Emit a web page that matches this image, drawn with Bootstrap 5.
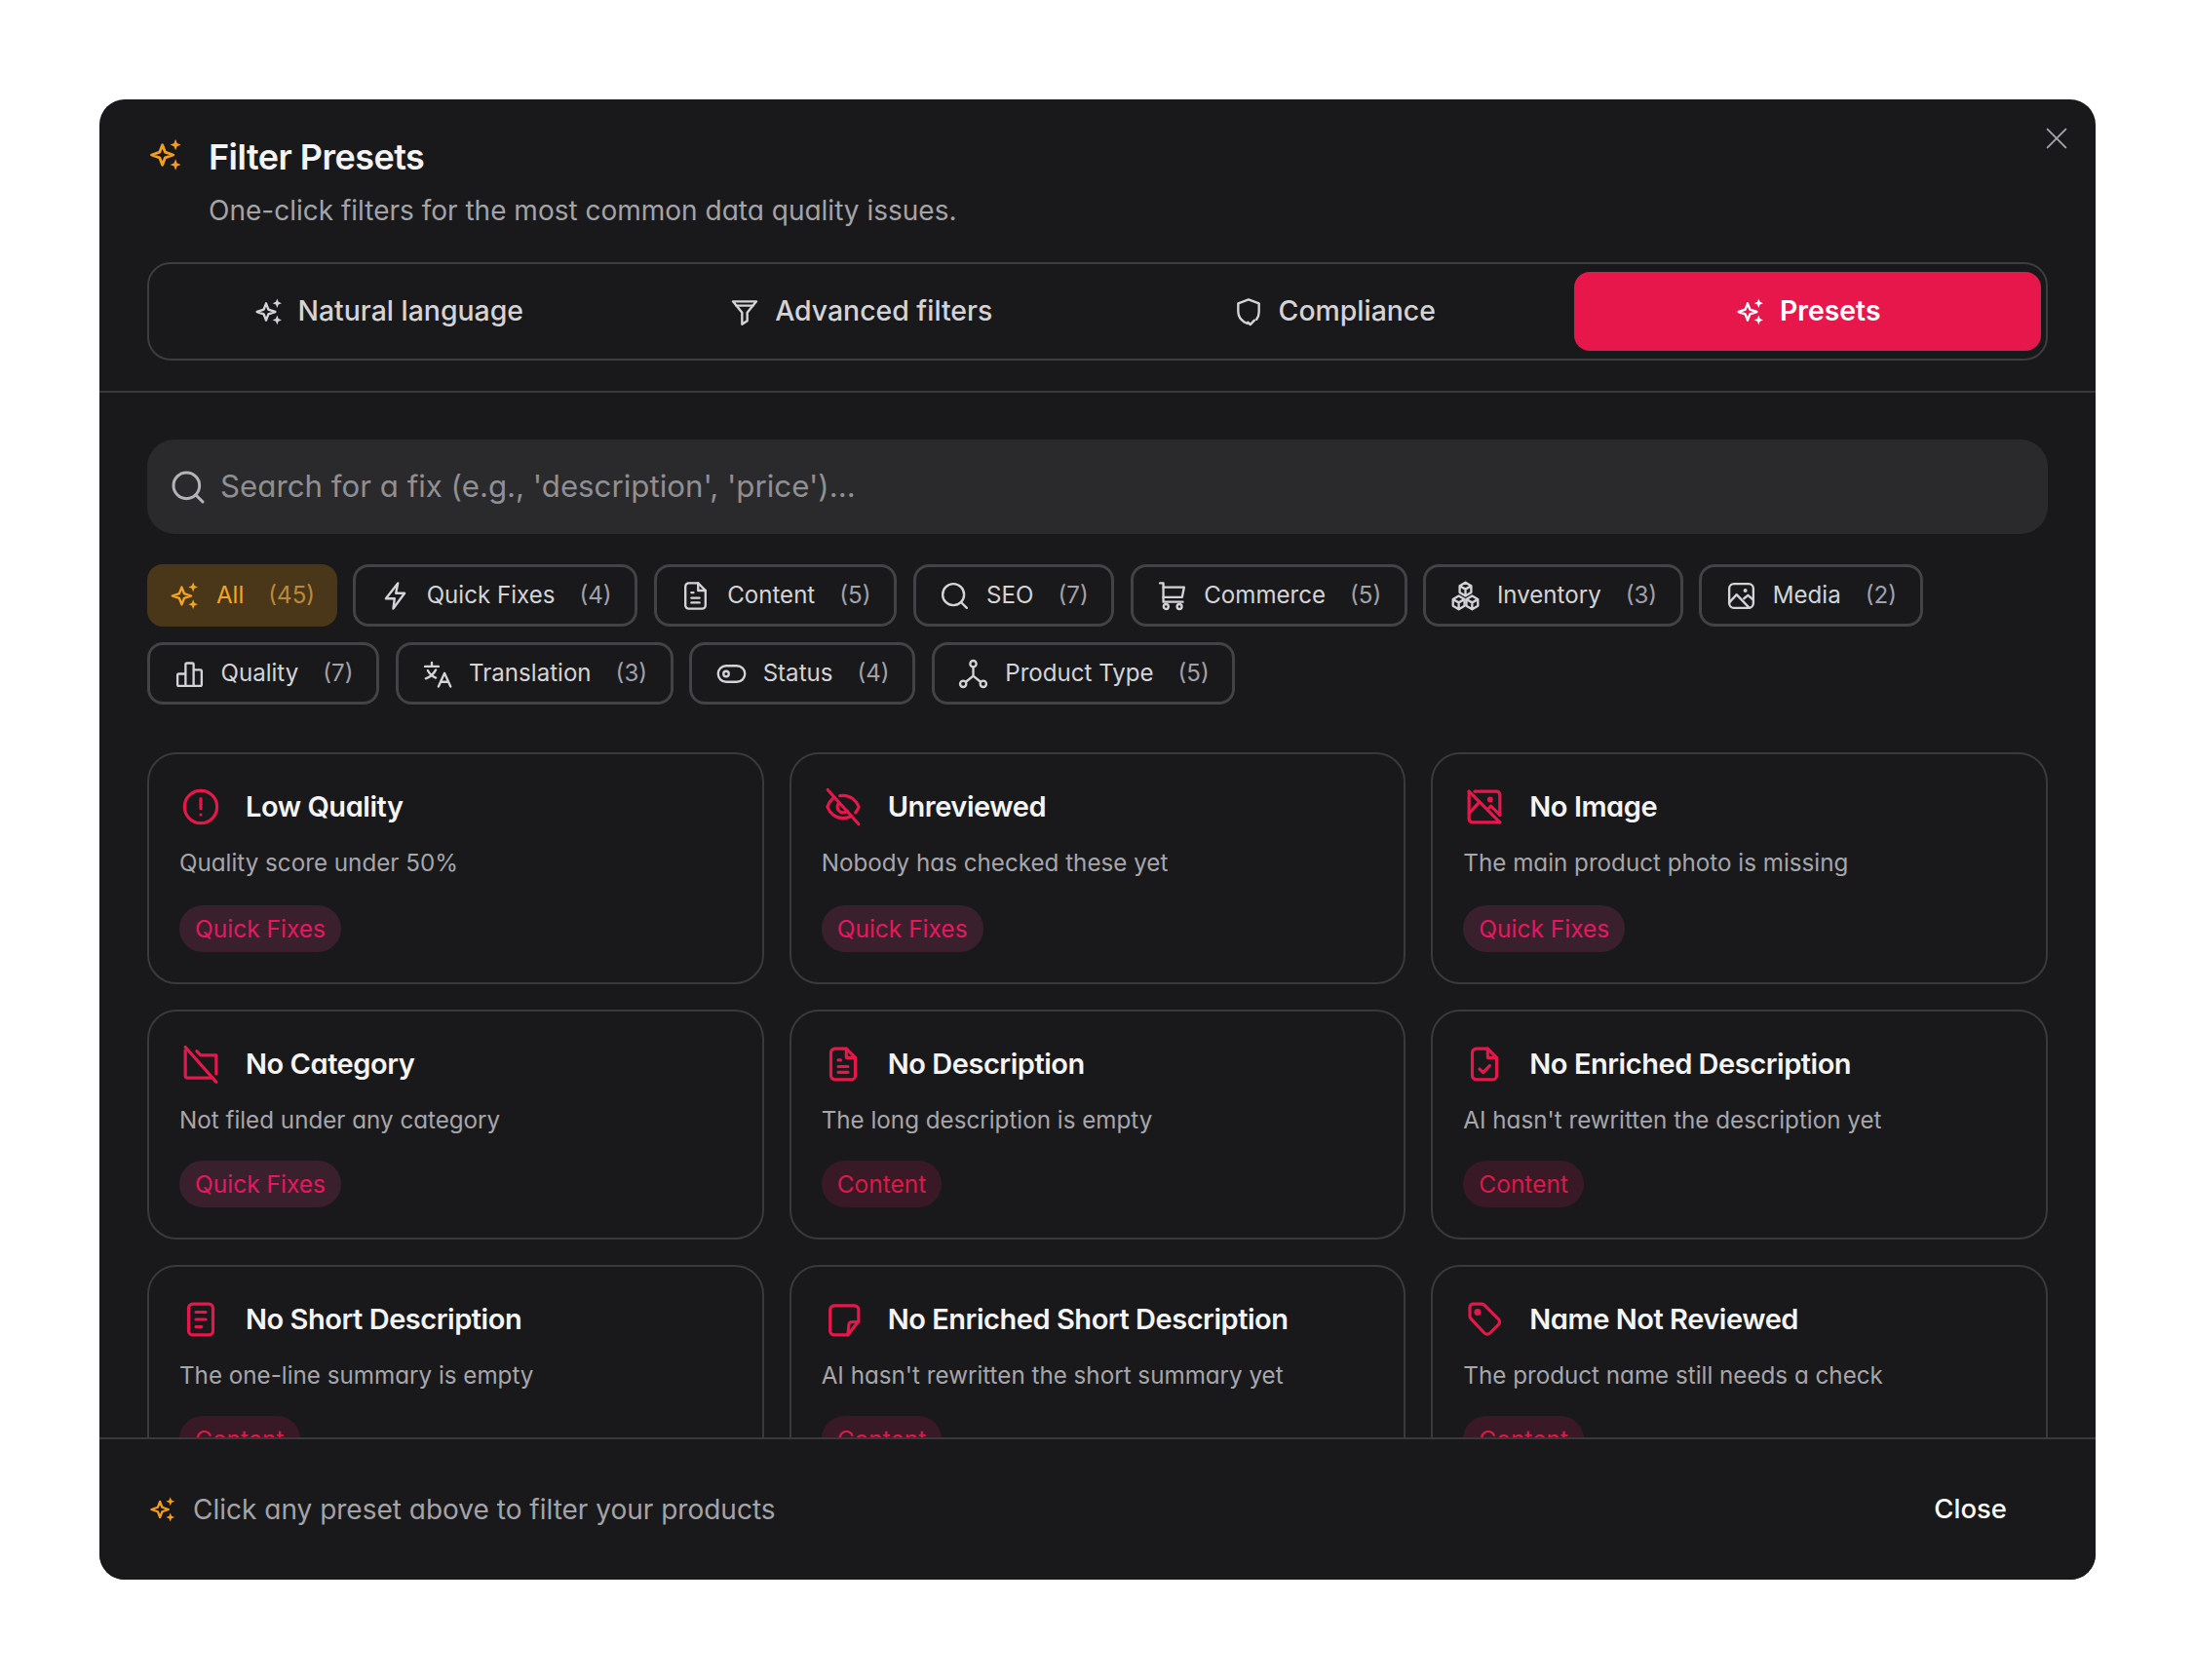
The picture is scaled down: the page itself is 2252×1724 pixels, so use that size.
<!DOCTYPE html>
<html lang="en">
<head>
<meta charset="UTF-8">
<meta name="viewport" content="width=device-width, initial-scale=1.0">
<title>Filter Presets</title>
<link href="https://cdn.jsdelivr.net/npm/bootstrap@5.3.0/dist/css/bootstrap.min.css" rel="stylesheet">
<style>
  body { background: #fff; font-family: "Inter", "Noto Sans", sans-serif; font-feature-settings: "cv11" 1; }
  .preset-modal { width: 2048px; height: 1519px; margin: 102px; background: #19191b; border-radius: 26px; overflow: hidden; color: #e4e4e7; }
  .ico { fill: none; stroke: currentColor; stroke-width: 1.8; stroke-linecap: round; stroke-linejoin: round; flex-shrink: 0; }
  .ico-30 { width: 30px; height: 30px; }
  .ico-40 { width: 40px; height: 40px; }
  .x-btn { top: 24px; right: 24px; padding: 0; border: 0; background: none; color: #a1a1aa; line-height: 0; }
  .x-btn .ico { width: 32px; height: 32px; stroke-width: 1.5; }
  .head-area { padding: 37px 49px 31px; border-bottom: 2px solid #39393c; }
  .head-title { font-size: 36px; line-height: 44px; font-weight: 600; letter-spacing: -0.015em; color: #f4f4f5; margin: 0; }
  .head-spark { width: 38px; height: 38px; color: #f59e1b; margin: -5px 26px 0 -1px; }
  .head-sub { font-size: 28px; line-height: 40px; color: #a3a3a8; margin: 13px 0 33px 63px; }
  .tab-bar { height: 101px; border: 2px solid #3d3d40; border-radius: 24px; padding: 8px 5px; gap: 6px; display: grid; grid-template-columns: repeat(4, 1fr); }
  .tab-item { display: flex; align-items: center; justify-content: center; gap: 15px; font-size: 28.4px; font-weight: 500; color: #d4d4d8; border: 0; border-radius: 16px; }
  .tab-item .ico { width: 32px; height: 32px; }
  .tab-item.on { background: #e8174b; color: #fff; font-weight: 600; }
  .tab-item:hover { color: #d4d4d8; }
  .tab-item.on:hover { background: #e8174b; color: #fff; }
  .main-area { min-height: 0; padding: 48px 49px 0; }
  .search-box { height: 97px; background: #2a2a2d; border-radius: 28px; padding-left: 22px; gap: 13px; color: #b4b4b8; margin-bottom: 31px; }
  .search-box input { background: transparent; border: 0; padding: 0; font-size: 31.25px; color: #e4e4e7; box-shadow: none; font-feature-settings: "cv11" 1; }
  .search-box input::placeholder { color: #8f8f94; opacity: 1; }
  .chip-wrap { gap: 16px 16.5px; margin-bottom: 49px; }
  .chip-btn { height: 64px; display: flex; align-items: center; padding: 0 23.6px 0 23.5px; border: 3px solid #434347; border-radius: 16px; font-size: 24.1px; font-weight: 400; color: #d4d4d8; }
  .chip-btn:hover { color: #d4d4d8; border-color: #434347; }
  .chip-btn .ico { width: 33px; height: 33px; margin-right: 16px; stroke-width: 1.7; }
  .chip-btn .chip-n { margin-left: 25px; color: #a1a1aa; }
  .chip-btn.on { background: #4a3719; border-color: #4a3719; border-width: 0; padding: 0 22.6px 0 21px; color: #f5a524; }
  .chip-btn.on .ico { margin-right: 17px; }
  .chip-btn.on .chip-n { color: #b98a38; }
  .preset-grid { --bs-gutter-x: 26px; --bs-gutter-y: 26px; }
  .preset-card { height: 236px; background: #19191b; border: 2px solid #3a3a3d; border-radius: 30px; padding: 25.5px 31px 31px; color: #e4e4e7; }
  .preset-grid .col:nth-child(-n+3) .preset-card { height: 238px; }
  .preset-icon { width: 44px; height: 56px; margin-right: 24px; color: #e8174b; }
  .preset-icon .ico { stroke-width: 1.9; }
  .preset-name { font-size: 29px; line-height: 56px; font-weight: 600; letter-spacing: -0.016em; color: #f4f4f5; margin: 0; }
  .preset-desc { font-size: 24.2px; line-height: 36px; color: #a6a6ab; margin: 12px 0 0; }
  .cat-pill { height: 48px; padding: 0 16px; border-radius: 24px; font-size: 24.5px; font-weight: 400; line-height: 48px; }
  .cat-quick { background: #3a202d; color: #e5185f; }
  .cat-content { background: #3a1926; color: #d81b4a; }
  .foot-area { height: 146px; flex-shrink: 0; padding: 0 49px; border-top: 2px solid #39393c; background: #19191b; }
  .foot-spark { color: #f59e1b; margin-right: 17px; }
  .foot-text { font-size: 28px; color: #a3a3a8; }
  .close-btn { font-size: 27.5px; font-weight: 500; color: #fafafa; border: 0; padding: 10px 42px; }
  .close-btn:hover { color: #fafafa; }
</style>
</head>
<body>
<svg width="0" height="0" class="d-block">
  <defs>
    <symbol id="i-spark" viewBox="0 0 24 24">
      <path d="M10.500 5.500l1.800 4.700 5.200 1.800-5.200 1.800-1.800 4.700-1.800-4.700L3.500 12l5.200-1.800z"/>
      <path d="M19 1.800l1 2.600 2.500 1-2.500 1-1 2.600-1-2.600-2.500-1 2.500-1z" fill="currentColor" stroke="none"/>
      <path d="M19 14.700l1 2.600 2.500 1-2.500 1-1 2.600-1-2.600-2.500-1 2.500-1z" fill="currentColor" stroke="none"/>
    </symbol>
    <symbol id="i-filter" viewBox="0 0 24 24">
      <path d="M3 4h18l-7 8.500V19l-4 2.500v-9z"/><path d="M5.500 7.200h13"/>
    </symbol>
    <symbol id="i-shield" viewBox="0 0 24 24">
      <path d="M11 21C7 19.300 4 16.800 4 12V5.500L12 2.500l8 3V12c0 2.400-.7 4.300-1.900 5.800"/><path d="M11.500 20l1.800 1.800 3.200-3.300"/>
    </symbol>
    <symbol id="i-search" viewBox="0 0 24 24">
      <circle cx="11" cy="11" r="8"/><path d="M21 21l-4.300-4.300"/>
    </symbol>
    <symbol id="i-bolt" viewBox="0 0 24 24">
      <path d="M14 2.500L5 14h6.500l-1 7.500L19 10h-6.500z"/>
    </symbol>
    <symbol id="i-file" viewBox="0 0 24 24">
      <path d="M14 2.500H7a2.500 2.500 0 0 0-2.500 2.500v14A2.500 2.500 0 0 0 7 21.500h10a2.500 2.500 0 0 0 2.500-2.500V8z"/><path d="M14 2.500V8h5.500"/><path d="M9 9.500h1.500M9 13.500h6M9 17h6"/>
    </symbol>
    <symbol id="i-cart" viewBox="0 0 24 24">
      <path d="M3 2.500h2.500v14H20"/><path d="M5.500 5.500H21l-1.500 7.500h-14"/><circle cx="7.500" cy="20" r="1.800"/><circle cx="17.500" cy="20" r="1.800"/>
    </symbol>
    <symbol id="i-boxes" viewBox="0 0 24 24">
      <path d="M12 2l4.300 2.500v5L12 12 7.700 9.500v-5zM7.700 4.500L12 7l4.300-2.500M12 7v5"/>
      <path d="M7 12l4.300 2.500v5L7 22l-4.300-2.500v-5zM2.700 14.500L7 17l4.300-2.500M7 17v5"/>
      <path d="M17 12l4.300 2.500v5L17 22l-4.300-2.500v-5zM12.700 14.500L17 17l4.300-2.500M17 17v5"/>
    </symbol>
    <symbol id="i-image" viewBox="0 0 24 24">
      <rect x="3" y="3" width="18" height="18" rx="3.500"/><path d="M3 17l5.500-6 9.500 10"/><path d="M14 14l3-2.500 4 3.500"/><circle cx="15" cy="8" r=".6" fill="currentColor"/>
    </symbol>
    <symbol id="i-bars" viewBox="0 0 24 24">
      <path d="M9 21H4a1 1 0 0 1-1-1v-7a1 1 0 0 1 1-1h5zM9 21V5a1 1 0 0 1 1-1h4a1 1 0 0 1 1 1v16zM15 21V9h5a1 1 0 0 1 1 1v10a1 1 0 0 1-1 1z"/>
    </symbol>
    <symbol id="i-lang" viewBox="0 0 24 24">
      <path d="M3 6.500h10M8 3.500v3M5 9.500c1.500 3 3.500 4.500 6 5.500M11 9c-1.500 3-3.500 5-7.500 6.500"/><path d="M13 21.500l4.500-10 4.500 10M14.500 18h6"/>
    </symbol>
    <symbol id="i-toggle" viewBox="0 0 24 24">
      <rect x="2" y="6" width="20" height="12" rx="6"/><circle cx="8" cy="12" r="2"/>
    </symbol>
    <symbol id="i-fork" viewBox="0 0 24 24">
      <circle cx="12" cy="4.500" r="2.300"/><circle cx="4.500" cy="19.500" r="2.300"/><circle cx="19.500" cy="19.500" r="2.300"/><path d="M12 7v6.500M6.500 18L12 13.500l5.500 4.500"/>
    </symbol>
    <symbol id="i-alert" viewBox="0 0 24 24">
      <circle cx="12" cy="12" r="10"/><path d="M12 7v6M12 16.800v.01"/>
    </symbol>
    <symbol id="i-eyeoff" viewBox="0 0 24 24">
      <path d="M5.800 6.800C4.200 8.100 3 9.900 2.300 12c1.600 4.200 5.400 7 9.700 7 1.800 0 3.500-.5 5-1.300M10 5.200c.6-.1 1.300-.2 2-.2 4.300 0 8.100 2.800 9.700 7-.5 1.300-1.200 2.500-2.100 3.500"/><path d="M9.500 9.500a3.500 3.500 0 0 0 5 5"/><path d="M2.500 1.500l19 21"/>
    </symbol>
    <symbol id="i-noimage" viewBox="0 0 24 24">
      <path d="M6 2.500h13.500a2 2 0 0 1 2 2V17M21.500 21.500H4.500a2 2 0 0 1-2-2V2.500"/><path d="M2.500 16l5.500-6"/><path d="M2.500 2.500l19 19"/><circle cx="15.500" cy="7.500" r=".8" fill="currentColor"/><path d="M14 13.500l2-2 5.500 5.500"/>
    </symbol>
    <symbol id="i-nofolder" viewBox="0 0 24 24">
      <path d="M2.500 3.500v15.500a1.500 1.500 0 0 0 1.500 1.500h15M9.500 4l2.500 2.500h9.500V18"/><path d="M2.500 1.500l19 21.500"/>
    </symbol>
    <symbol id="i-filecheck" viewBox="0 0 24 24">
      <path d="M14 2.500H7a2.500 2.500 0 0 0-2.500 2.500v14A2.500 2.500 0 0 0 7 21.500h10a2.500 2.500 0 0 0 2.500-2.500V8z"/><path d="M14 2.500V8h5.500"/><path d="M9 15l2.200 2.200 4-4.200"/>
    </symbol>
    <symbol id="i-short" viewBox="0 0 24 24">
      <rect x="4.500" y="2.500" width="15" height="19" rx="2.500"/><path d="M9 7.500h6M9 12h6M9 16.500h3.500"/>
    </symbol>
    <symbol id="i-note" viewBox="0 0 24 24">
      <path d="M15 21.500H6.500A2.500 2.500 0 0 1 4 19V6a2.500 2.500 0 0 1 2.500-2.500h12.500A2.500 2.500 0 0 1 21.500 6v7z"/><path d="M15 21.500l.5-6a2 2 0 0 1 2-2h4"/>
    </symbol>
    <symbol id="i-tag" viewBox="0 0 24 24">
      <path d="M3 4.500A2 2 0 0 1 5 2.500h5.500a2 2 0 0 1 1.400.6l8.700 8.700a2.400 2.400 0 0 1 0 3.400l-5.200 5.200a2.400 2.400 0 0 1-3.400 0L3.600 11.500a2 2 0 0 1-.6-1.400z"/><circle cx="7.800" cy="7.500" r="1.200" fill="currentColor"/>
    </symbol>
  </defs>
</svg>

<div class="preset-modal position-relative d-flex flex-column">
  <button type="button" class="x-btn position-absolute" aria-label="Close">
    <svg class="ico" viewBox="0 0 24 24"><path d="M5 5l14 14M19 5L5 19"/></svg>
  </button>

  <div class="head-area flex-shrink-0">
    <div class="d-flex align-items-center">
      <svg class="ico head-spark"><use href="#i-spark"/></svg>
      <h1 class="head-title">Filter Presets</h1>
    </div>
    <p class="head-sub">One-click filters for the most common data quality issues.</p>
    <div class="tab-bar">
      <button type="button" class="btn tab-item"><svg class="ico"><use href="#i-spark"/></svg>Natural language</button>
      <button type="button" class="btn tab-item"><svg class="ico"><use href="#i-filter"/></svg>Advanced filters</button>
      <button type="button" class="btn tab-item"><svg class="ico"><use href="#i-shield"/></svg>Compliance</button>
      <button type="button" class="btn tab-item on"><svg class="ico"><use href="#i-spark"/></svg>Presets</button>
    </div>
  </div>

  <div class="main-area flex-grow-1 overflow-hidden">
    <div class="search-box d-flex align-items-center">
      <svg class="ico ico-40"><use href="#i-search"/></svg>
      <input type="text" class="form-control" placeholder="Search for a fix (e.g., 'description', 'price')...">
    </div>

    <div class="chip-wrap d-flex flex-wrap">
      <button type="button" class="btn chip-btn on"><svg class="ico"><use href="#i-spark"/></svg>All<span class="chip-n">(45)</span></button>
      <button type="button" class="btn chip-btn"><svg class="ico"><use href="#i-bolt"/></svg>Quick Fixes<span class="chip-n">(4)</span></button>
      <button type="button" class="btn chip-btn"><svg class="ico"><use href="#i-file"/></svg>Content<span class="chip-n">(5)</span></button>
      <button type="button" class="btn chip-btn"><svg class="ico"><use href="#i-search"/></svg>SEO<span class="chip-n">(7)</span></button>
      <button type="button" class="btn chip-btn"><svg class="ico"><use href="#i-cart"/></svg>Commerce<span class="chip-n">(5)</span></button>
      <button type="button" class="btn chip-btn"><svg class="ico"><use href="#i-boxes"/></svg>Inventory<span class="chip-n">(3)</span></button>
      <button type="button" class="btn chip-btn"><svg class="ico"><use href="#i-image"/></svg>Media<span class="chip-n">(2)</span></button>
      <button type="button" class="btn chip-btn"><svg class="ico"><use href="#i-bars"/></svg>Quality<span class="chip-n">(7)</span></button>
      <button type="button" class="btn chip-btn"><svg class="ico"><use href="#i-lang"/></svg>Translation<span class="chip-n">(3)</span></button>
      <button type="button" class="btn chip-btn"><svg class="ico"><use href="#i-toggle"/></svg>Status<span class="chip-n">(4)</span></button>
      <button type="button" class="btn chip-btn"><svg class="ico"><use href="#i-fork"/></svg>Product Type<span class="chip-n">(5)</span></button>
    </div>

    <div class="row row-cols-3 preset-grid">
      <div class="col"><div class="card preset-card">
        <div class="d-flex align-items-center"><span class="preset-icon d-flex align-items-center justify-content-center"><svg class="ico ico-40"><use href="#i-alert"/></svg></span><h2 class="preset-name">Low Quality</h2></div>
        <p class="preset-desc">Quality score under 50%</p>
        <div class="mt-auto"><span class="badge cat-pill cat-quick">Quick Fixes</span></div>
      </div></div>
      <div class="col"><div class="card preset-card">
        <div class="d-flex align-items-center"><span class="preset-icon d-flex align-items-center justify-content-center"><svg class="ico ico-40"><use href="#i-eyeoff"/></svg></span><h2 class="preset-name">Unreviewed</h2></div>
        <p class="preset-desc">Nobody has checked these yet</p>
        <div class="mt-auto"><span class="badge cat-pill cat-quick">Quick Fixes</span></div>
      </div></div>
      <div class="col"><div class="card preset-card">
        <div class="d-flex align-items-center"><span class="preset-icon d-flex align-items-center justify-content-center"><svg class="ico ico-40"><use href="#i-noimage"/></svg></span><h2 class="preset-name">No Image</h2></div>
        <p class="preset-desc">The main product photo is missing</p>
        <div class="mt-auto"><span class="badge cat-pill cat-quick">Quick Fixes</span></div>
      </div></div>
      <div class="col"><div class="card preset-card">
        <div class="d-flex align-items-center"><span class="preset-icon d-flex align-items-center justify-content-center"><svg class="ico ico-40"><use href="#i-nofolder"/></svg></span><h2 class="preset-name">No Category</h2></div>
        <p class="preset-desc">Not filed under any category</p>
        <div class="mt-auto"><span class="badge cat-pill cat-quick">Quick Fixes</span></div>
      </div></div>
      <div class="col"><div class="card preset-card">
        <div class="d-flex align-items-center"><span class="preset-icon d-flex align-items-center justify-content-center"><svg class="ico ico-40"><use href="#i-file"/></svg></span><h2 class="preset-name">No Description</h2></div>
        <p class="preset-desc">The long description is empty</p>
        <div class="mt-auto"><span class="badge cat-pill cat-content">Content</span></div>
      </div></div>
      <div class="col"><div class="card preset-card">
        <div class="d-flex align-items-center"><span class="preset-icon d-flex align-items-center justify-content-center"><svg class="ico ico-40"><use href="#i-filecheck"/></svg></span><h2 class="preset-name">No Enriched Description</h2></div>
        <p class="preset-desc">AI hasn't rewritten the description yet</p>
        <div class="mt-auto"><span class="badge cat-pill cat-content">Content</span></div>
      </div></div>
      <div class="col"><div class="card preset-card">
        <div class="d-flex align-items-center"><span class="preset-icon d-flex align-items-center justify-content-center"><svg class="ico ico-40"><use href="#i-short"/></svg></span><h2 class="preset-name">No Short Description</h2></div>
        <p class="preset-desc">The one-line summary is empty</p>
        <div class="mt-auto"><span class="badge cat-pill cat-content">Content</span></div>
      </div></div>
      <div class="col"><div class="card preset-card">
        <div class="d-flex align-items-center"><span class="preset-icon d-flex align-items-center justify-content-center"><svg class="ico ico-40"><use href="#i-note"/></svg></span><h2 class="preset-name">No Enriched Short Description</h2></div>
        <p class="preset-desc">AI hasn't rewritten the short summary yet</p>
        <div class="mt-auto"><span class="badge cat-pill cat-content">Content</span></div>
      </div></div>
      <div class="col"><div class="card preset-card">
        <div class="d-flex align-items-center"><span class="preset-icon d-flex align-items-center justify-content-center"><svg class="ico ico-40"><use href="#i-tag"/></svg></span><h2 class="preset-name">Name Not Reviewed</h2></div>
        <p class="preset-desc">The product name still needs a check</p>
        <div class="mt-auto"><span class="badge cat-pill cat-content">Content</span></div>
      </div></div>
    </div>
  </div>

  <div class="foot-area d-flex align-items-center">
    <svg class="ico ico-30 foot-spark"><use href="#i-spark"/></svg>
    <span class="foot-text">Click any preset above to filter your products</span>
    <button type="button" class="btn close-btn ms-auto">Close</button>
  </div>
</div>
<script src="https://cdn.jsdelivr.net/npm/bootstrap@5.3.0/dist/js/bootstrap.bundle.min.js"></script>
</body>
</html>
